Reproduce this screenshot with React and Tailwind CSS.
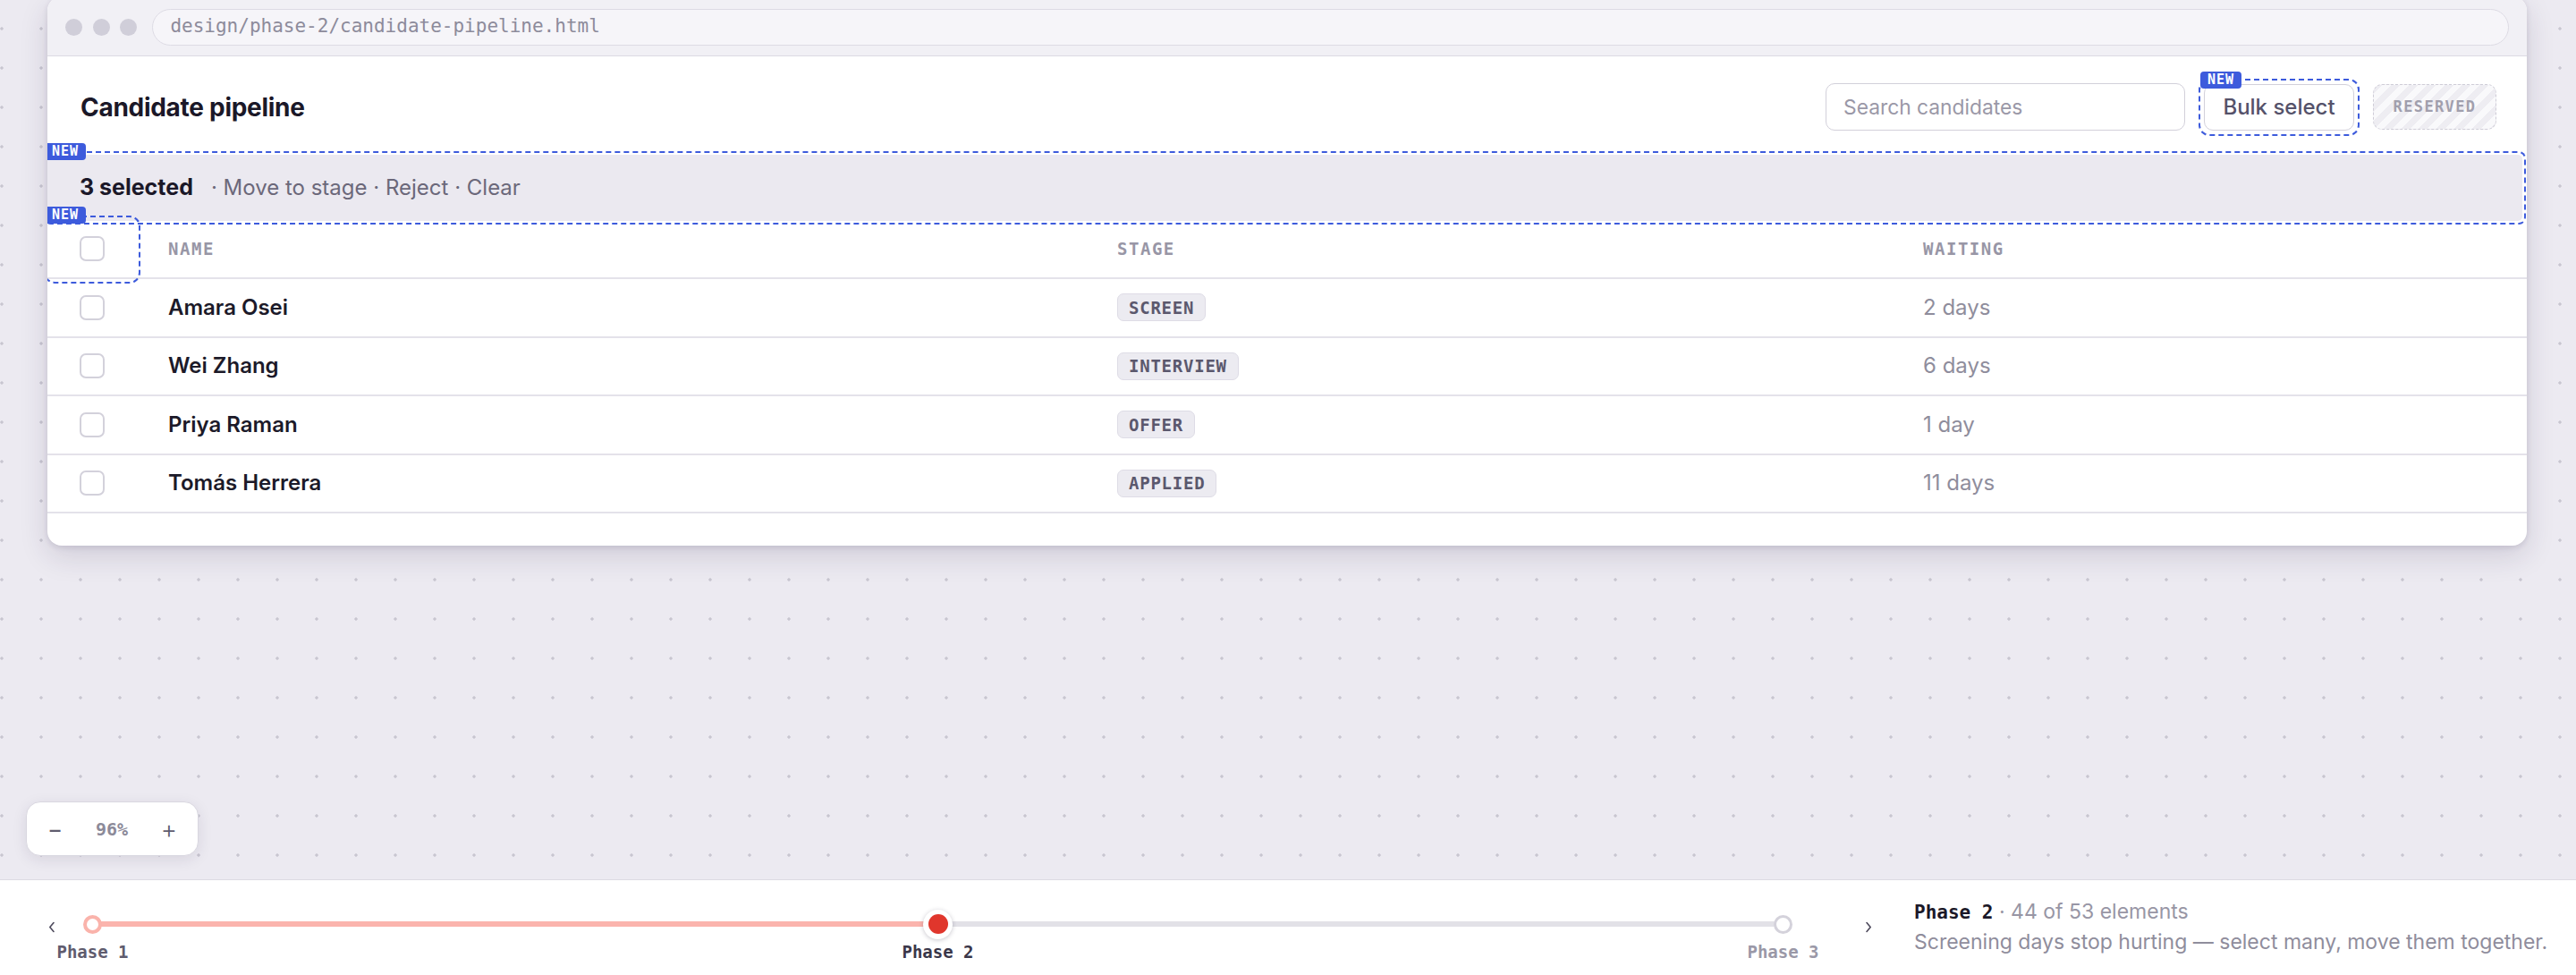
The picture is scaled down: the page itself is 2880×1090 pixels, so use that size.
import React from "react";

const mono = "font-['DejaVu_Sans_Mono',monospace]";

const candidates = [
  { name: "Amara Osei", stage: "SCREEN", waiting: "2 days" },
  { name: "Wei Zhang", stage: "INTERVIEW", waiting: "6 days" },
  { name: "Priya Raman", stage: "OFFER", waiting: "1 day" },
  { name: "Tomás Herrera", stage: "APPLIED", waiting: "11 days" },
];

/* small blue marker pinned to the corner of an annotated element */
function NewTag({ className }) {
  return (
    <span
      className={
        "absolute z-20 flex h-[19px] w-[46px] items-center justify-center rounded-[4px] bg-[#3d5bdc] text-[15px] font-bold leading-none tracking-[0.06em] text-white font-['DejaVu_Sans_Mono',monospace] " +
        className
      }
    >
      NEW
    </span>
  );
}

function Checkbox() {
  return <div className="h-[28px] w-[28px] rounded-[7px] border-2 border-[#d3d1db] bg-white" />;
}

function Chevron({ dir }) {
  return (
    <svg width="8" height="13" viewBox="0 0 8 13" fill="none">
      <path
        d={dir === "left" ? "M6 1.5 1.8 6.5 6 11.5" : "M2 1.5 6.2 6.5 2 11.5"}
        stroke="#4d4a5c"
        strokeWidth="1.6"
        strokeLinecap="round"
        strokeLinejoin="round"
      />
    </svg>
  );
}

function PhaseNode({ label, state }) {
  return (
    <div className="flex w-[79px] shrink-0 flex-col items-center">
      <div className="relative z-10 flex h-[34px] items-center justify-center">
        {state === "done" && (
          <div className="h-[21px] w-[21px] rounded-full border-[4px] border-[#fab3ab] bg-white" />
        )}
        {state === "current" && (
          <div className="flex h-[33px] w-[33px] items-center justify-center rounded-full bg-white shadow-[0_1px_5px_rgba(40,30,60,0.25)]">
            <div className="h-[22px] w-[22px] rounded-full bg-[#e0362c]" />
          </div>
        )}
        {state === "todo" && (
          <div className="h-[21px] w-[21px] rounded-full border-[3px] border-[#d4d2db] bg-white" />
        )}
      </div>
      <div
        className={
          "mt-[3px] whitespace-nowrap text-[19px] font-bold leading-[22px] font-['DejaVu_Sans_Mono',monospace] " +
          (state === "current" ? "text-[#3a3749]" : state === "done" ? "text-[#5f5c6e]" : "text-[#9a98a7]")
        }
      >
        {label}
      </div>
    </div>
  );
}

export default function App() {
  return (
    <div className="flex h-screen flex-col overflow-hidden bg-[#eceaf1] font-['Inter',sans-serif]">
      {/* canvas */}
      <div className="relative flex-1 bg-[radial-gradient(circle,#c8c6d0_1.4px,transparent_1.9px)] bg-[size:44px_44px] bg-[position:-20px_10px]">
        {/* browser window */}
        <div className="-mt-[4px] ml-[53px] w-[2772px] overflow-hidden rounded-[16px] bg-white shadow-[0_12px_32px_rgba(40,30,70,0.14),0_2px_6px_rgba(40,30,70,0.12)]">
          {/* chrome bar */}
          <div className="flex h-[67px] items-center border-b-[1.5px] border-[#dcdae3] bg-[#f1f0f5] px-[20px] pt-[2px]">
            <div className="flex gap-[11.7px]">
              <div className="h-[19px] w-[19px] rounded-full bg-[#d0ced9]" />
              <div className="h-[19px] w-[19px] rounded-full bg-[#d0ced9]" />
              <div className="h-[19px] w-[19px] rounded-full bg-[#d0ced9]" />
            </div>
            <div className={`ml-[17px] flex h-[41px] flex-1 items-center rounded-full border-[1.5px] border-[#dddbe4] bg-[#f6f5f9] pl-[19px] text-[21px] text-[#8d8b9b] ${mono}`}>
              design/phase-2/candidate-pipeline.html
            </div>
          </div>

          {/* page header */}
          <div className="flex h-[106px] items-center justify-between pl-[37px] pr-[34px] pt-[7px]">
            <h1 className="text-[28px] font-bold tracking-[-0.01em] text-[#1b1828]">Candidate pipeline</h1>
            <div className="flex items-center gap-[15px]">
              <input
                readOnly
                placeholder="Search candidates"
                className="h-[53px] w-[402px] rounded-[10px] border-[1.5px] border-[#d2d0da] bg-white pl-[19px] text-[22.8px] outline-none placeholder:text-[#9a98a7]"
              />
              <div className="relative rounded-[12px] border-2 border-dashed border-[#3d5bdc] p-[4px]">
                <NewTag className="left-[0px] top-[-10px]" />
                <button className="flex h-[52px] w-[168px] items-center justify-center rounded-[10px] border-[1.5px] border-[#d2d0da] bg-white text-[24px] font-medium text-[#55526a]">
                  Bulk select
                </button>
              </div>
              <div className={`flex h-[51px] w-[138px] items-center justify-center rounded-[10px] border-[1.5px] border-dashed border-[#cfcdd7] bg-[repeating-linear-gradient(135deg,#eeedf2_0px,#eeedf2_7px,#f9f9fb_7px,#f9f9fb_14px)] text-[17px] font-bold tracking-[0.08em] text-[#a19fad] ${mono}`}>
                RESERVED
              </div>
            </div>
          </div>

          {/* bulk action bar */}
          <div className="relative -ml-[4px] mr-[1px] rounded-[8px] border-2 border-dashed border-[#3d5bdc] p-[2px]">
            <NewTag className="left-[-1px] top-[-11px]" />
            <div className="flex h-[74px] items-center rounded-[5px] bg-[#ebe9f0] pl-[36px]">
              <span className="text-[25px] font-bold text-[#1b1828]">3 selected</span>
              <span className="ml-[20px] text-[24px] text-[#6b687a]">· Move to stage · Reject · Clear</span>
            </div>
          </div>

          {/* table */}
          <div className="pb-[36px]">
            <div className={`relative flex h-[61px] items-center border-b-2 border-[#e4e2ea] pb-[5px] text-[19px] font-bold tracking-[0.08em] text-[#9896a6] ${mono}`}>
              <NewTag className="left-[-3px] top-[-20px]" />
              <div className="absolute left-[-4px] top-[-10px] h-[76px] w-[108px] rounded-[12px] border-2 border-dashed border-[#3d5bdc]" />
              <div className="w-[135px] shrink-0 pl-[36px]">
                <Checkbox />
              </div>
              <div className="w-[1061px] shrink-0">NAME</div>
              <div className="w-[901px] shrink-0">STAGE</div>
              <div className="flex-1">WAITING</div>
            </div>

            {candidates.map((c) => (
              <div key={c.name} className="flex h-[65.5px] items-center border-b-2 border-[#e4e2ea]">
                <div className="w-[135px] shrink-0 pl-[36px]">
                  <Checkbox />
                </div>
                <div className="w-[1061px] shrink-0 text-[24px] font-semibold text-[#1c1a29]">{c.name}</div>
                <div className="w-[901px] shrink-0">
                  <span className={`inline-flex h-[31px] items-center rounded-[7px] border border-[#dedce6] bg-[#ecebf1] px-[12px] text-[19px] font-bold tracking-[0.04em] text-[#5b586d] ${mono}`}>
                    {c.stage}
                  </span>
                </div>
                <div className="flex-1 text-[24px] text-[#8f8d9c]">{c.waiting}</div>
              </div>
            ))}
          </div>
        </div>

        {/* zoom control */}
        <div className="absolute left-[29px] top-[896px] flex h-[61px] w-[193px] items-center justify-between rounded-[16px] border border-[#d9d7e0] bg-white px-[23px] shadow-[0_4px_16px_rgba(40,30,70,0.10)]">
          <span className="text-[26px] leading-none text-[#5f5c6e]">−</span>
          <span className={`text-[20px] font-bold text-[#8c8a99] ${mono}`}>96%</span>
          <span className="text-[28px] font-light leading-none text-[#5f5c6e]">+</span>
        </div>
      </div>

      {/* phase timeline */}
      <footer className="flex h-[107px] shrink-0 items-start border-t border-[#dcdae2] bg-white pl-[52px]">
        <div className="mt-[46px] flex w-[12px] justify-center">
          <Chevron dir="left" />
        </div>
        <div className="mt-[32px] flex w-[1969px] items-start">
          <PhaseNode label="Phase 1" state="done" />
          <div className="-mx-[30px] mt-[14px] h-[6px] flex-1 bg-[#fbb4ad]" />
          <PhaseNode label="Phase 2" state="current" />
          <div className="-mx-[30px] mt-[14px] h-[6px] flex-1 bg-[#e2e1e7]" />
          <PhaseNode label="Phase 3" state="todo" />
        </div>
        <div className="ml-[50px] mt-[46px] flex w-[12px] justify-center">
          <Chevron dir="right" />
        </div>
        <div className="ml-[45px] mt-[22px] leading-[26px]">
          <div>
            <span className={`text-[21px] font-bold text-[#1b1828] ${mono}`}>Phase 2</span>
            <span className="text-[23px] text-[#9896a5]"> · 44 of 53 elements</span>
          </div>
          <div className="mt-[6px] text-[23px] text-[#8f8d9c]">
            Screening days stop hurting — select many, move them together.
          </div>
        </div>
      </footer>
    </div>
  );
}
